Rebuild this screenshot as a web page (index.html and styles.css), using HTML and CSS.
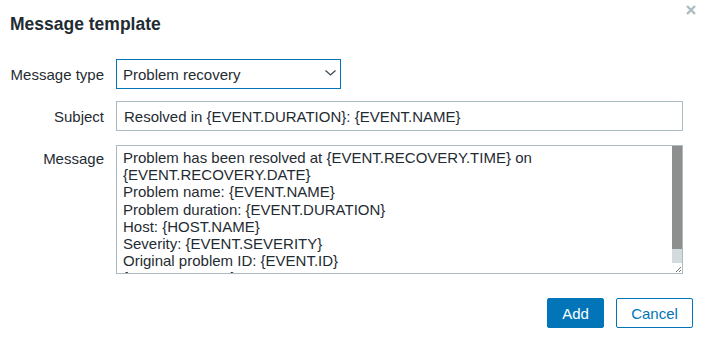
FILE: index.html
```html
<!DOCTYPE html>
<html lang="en">
<head>
    <meta charset="UTF-8">
    <meta name="viewport" content="width=device-width, initial-scale=1.0">
    <title>Message template</title>
    <link rel="stylesheet" href="styles.css">
</head>
<body>
    <div class="dialog">
        <div class="dialog-header">
            <h4>Message template</h4>
            <button class="btn-close" title="Close">
                <svg width="10" height="10" viewBox="0 0 10 10">
                    <path d="M1 1 L9 9 M9 1 L1 9" stroke="#acbbc2" stroke-width="2.4" stroke-linecap="butt"/>
                </svg>
            </button>
        </div>
        <form class="form-grid">
            <label class="form-label" for="message-type">Message type</label>
            <div class="form-field">
                <div class="select-wrap">
                    <select id="message-type" class="select">
                        <option>Problem recovery</option>
                    </select>
                    <svg class="chevron" width="11" height="6" viewBox="0 0 11 6">
                        <path d="M0.5 0.5 L5.5 5 L10.5 0.5" fill="none" stroke="#3d4a52" stroke-width="1.3"/>
                    </svg>
                </div>
            </div>

            <label class="form-label" for="subject">Subject</label>
            <div class="form-field">
                <input type="text" id="subject" class="input" value="Resolved in {EVENT.DURATION}: {EVENT.NAME}">
            </div>

            <label class="form-label label-top" for="message">Message</label>
            <div class="form-field field-top">
                <div class="textarea-box">
                    <textarea id="message" class="textarea">Problem has been resolved at {EVENT.RECOVERY.TIME} on {EVENT.RECOVERY.DATE}
Problem name: {EVENT.NAME}
Problem duration: {EVENT.DURATION}
Host: {HOST.NAME}
Severity: {EVENT.SEVERITY}
Original problem ID: {EVENT.ID}
{TRIGGER.URL}</textarea>
                    <div class="scrollbar">
                        <div class="scroll-thumb"></div>
                        <div class="scroll-track"></div>
                        <div class="scroll-corner">
                            <svg width="7" height="7" viewBox="0 0 7 7">
                                <path d="M6 1 L1 6 M6 4 L4 6" stroke="#6f6f6f" stroke-width="1"/>
                            </svg>
                        </div>
                    </div>
                </div>
            </div>
        </form>
        <div class="dialog-footer">
            <button class="btn btn-primary">Add</button>
            <button class="btn btn-alt">Cancel</button>
        </div>
    </div>
</body>
</html>
```

FILE: styles.css
```css
body {
    margin: 0;
    background: #fff;
    font-family: 'Liberation Sans', Arial, sans-serif;
    font-size: 15px;
    color: #1f2c33;
}

.dialog {
    position: relative;
    width: 701px;
    height: 340px;
    background: #fff;
    box-sizing: border-box;
}

.dialog-header {
    padding: 13px 10px 0 10px;
    height: 47px;
    box-sizing: border-box;
}

.dialog-header h4 {
    margin: 0;
    font-size: 17.5px;
    font-weight: bold;
    line-height: 22px;
    color: #1f2c33;
}

.btn-close {
    position: absolute;
    top: 4px;
    right: 4px;
    width: 12px;
    height: 12px;
    padding: 1px;
    border: none;
    background: none;
    cursor: pointer;
    display: flex;
}

.form-grid {
    display: grid;
    grid-template-columns: 94px 566px;
    column-gap: 12px;
    row-gap: 12px;
    padding: 12px 0 0 10px;
}

.form-label {
    text-align: right;
    align-self: center;
    white-space: nowrap;
    color: #1f2c33;
}

.form-label.label-top {
    align-self: start;
    padding-top: 7px;
}

.field-top {
    padding-top: 2px;
}

.select-wrap {
    position: relative;
    width: 225px;
}

.select {
    appearance: none;
    -webkit-appearance: none;
    width: 225px;
    height: 30px;
    margin: 0;
    padding: 0 28px 0 6px;
    border: 1px solid #0275b8;
    border-radius: 0;
    background: #fff;
    font-family: inherit;
    font-size: 15px;
    color: #1f2c33;
    outline: none;
}

.chevron {
    position: absolute;
    top: 11px;
    right: 5px;
    pointer-events: none;
}

.input {
    width: 567px;
    height: 30px;
    margin: 0;
    padding: 0 7px;
    box-sizing: border-box;
    border: 1px solid #acbbc2;
    font-family: inherit;
    font-size: 15px;
    color: #1f2c33;
    outline: none;
}

.textarea-box {
    display: flex;
    width: 567px;
    height: 129px;
    box-sizing: border-box;
    border: 1px solid #acbbc2;
    background: #fff;
}

.textarea {
    flex: 1;
    display: block;
    margin: 0;
    padding: 3px 6px 0 6px;
    border: none;
    resize: none;
    overflow: hidden;
    font-family: inherit;
    font-size: 15px;
    line-height: 17.2px;
    color: #1f2c33;
    outline: none;
}

.scrollbar {
    width: 10px;
    display: flex;
    flex-direction: column;
}

.scroll-thumb {
    height: 103px;
    background: #8e8e8e;
}

.scroll-track {
    flex: 1;
    background: #d3dbdf;
}

.scroll-corner {
    height: 10px;
    background: #fff;
    display: flex;
    align-items: flex-end;
    justify-content: flex-end;
}

.dialog-footer {
    display: flex;
    justify-content: flex-end;
    gap: 12px;
    padding: 24px 8px 0 0;
}

.btn {
    height: 30px;
    padding: 0;
    font-family: inherit;
    font-size: 15px;
    border-radius: 2px;
    cursor: pointer;
}

.btn-primary {
    width: 57px;
    background: #0275b8;
    border: 1px solid #0275b8;
    color: #fff;
}

.btn-alt {
    width: 77px;
    background: #fff;
    border: 1px solid #0275b8;
    color: #0275b8;
}
```
